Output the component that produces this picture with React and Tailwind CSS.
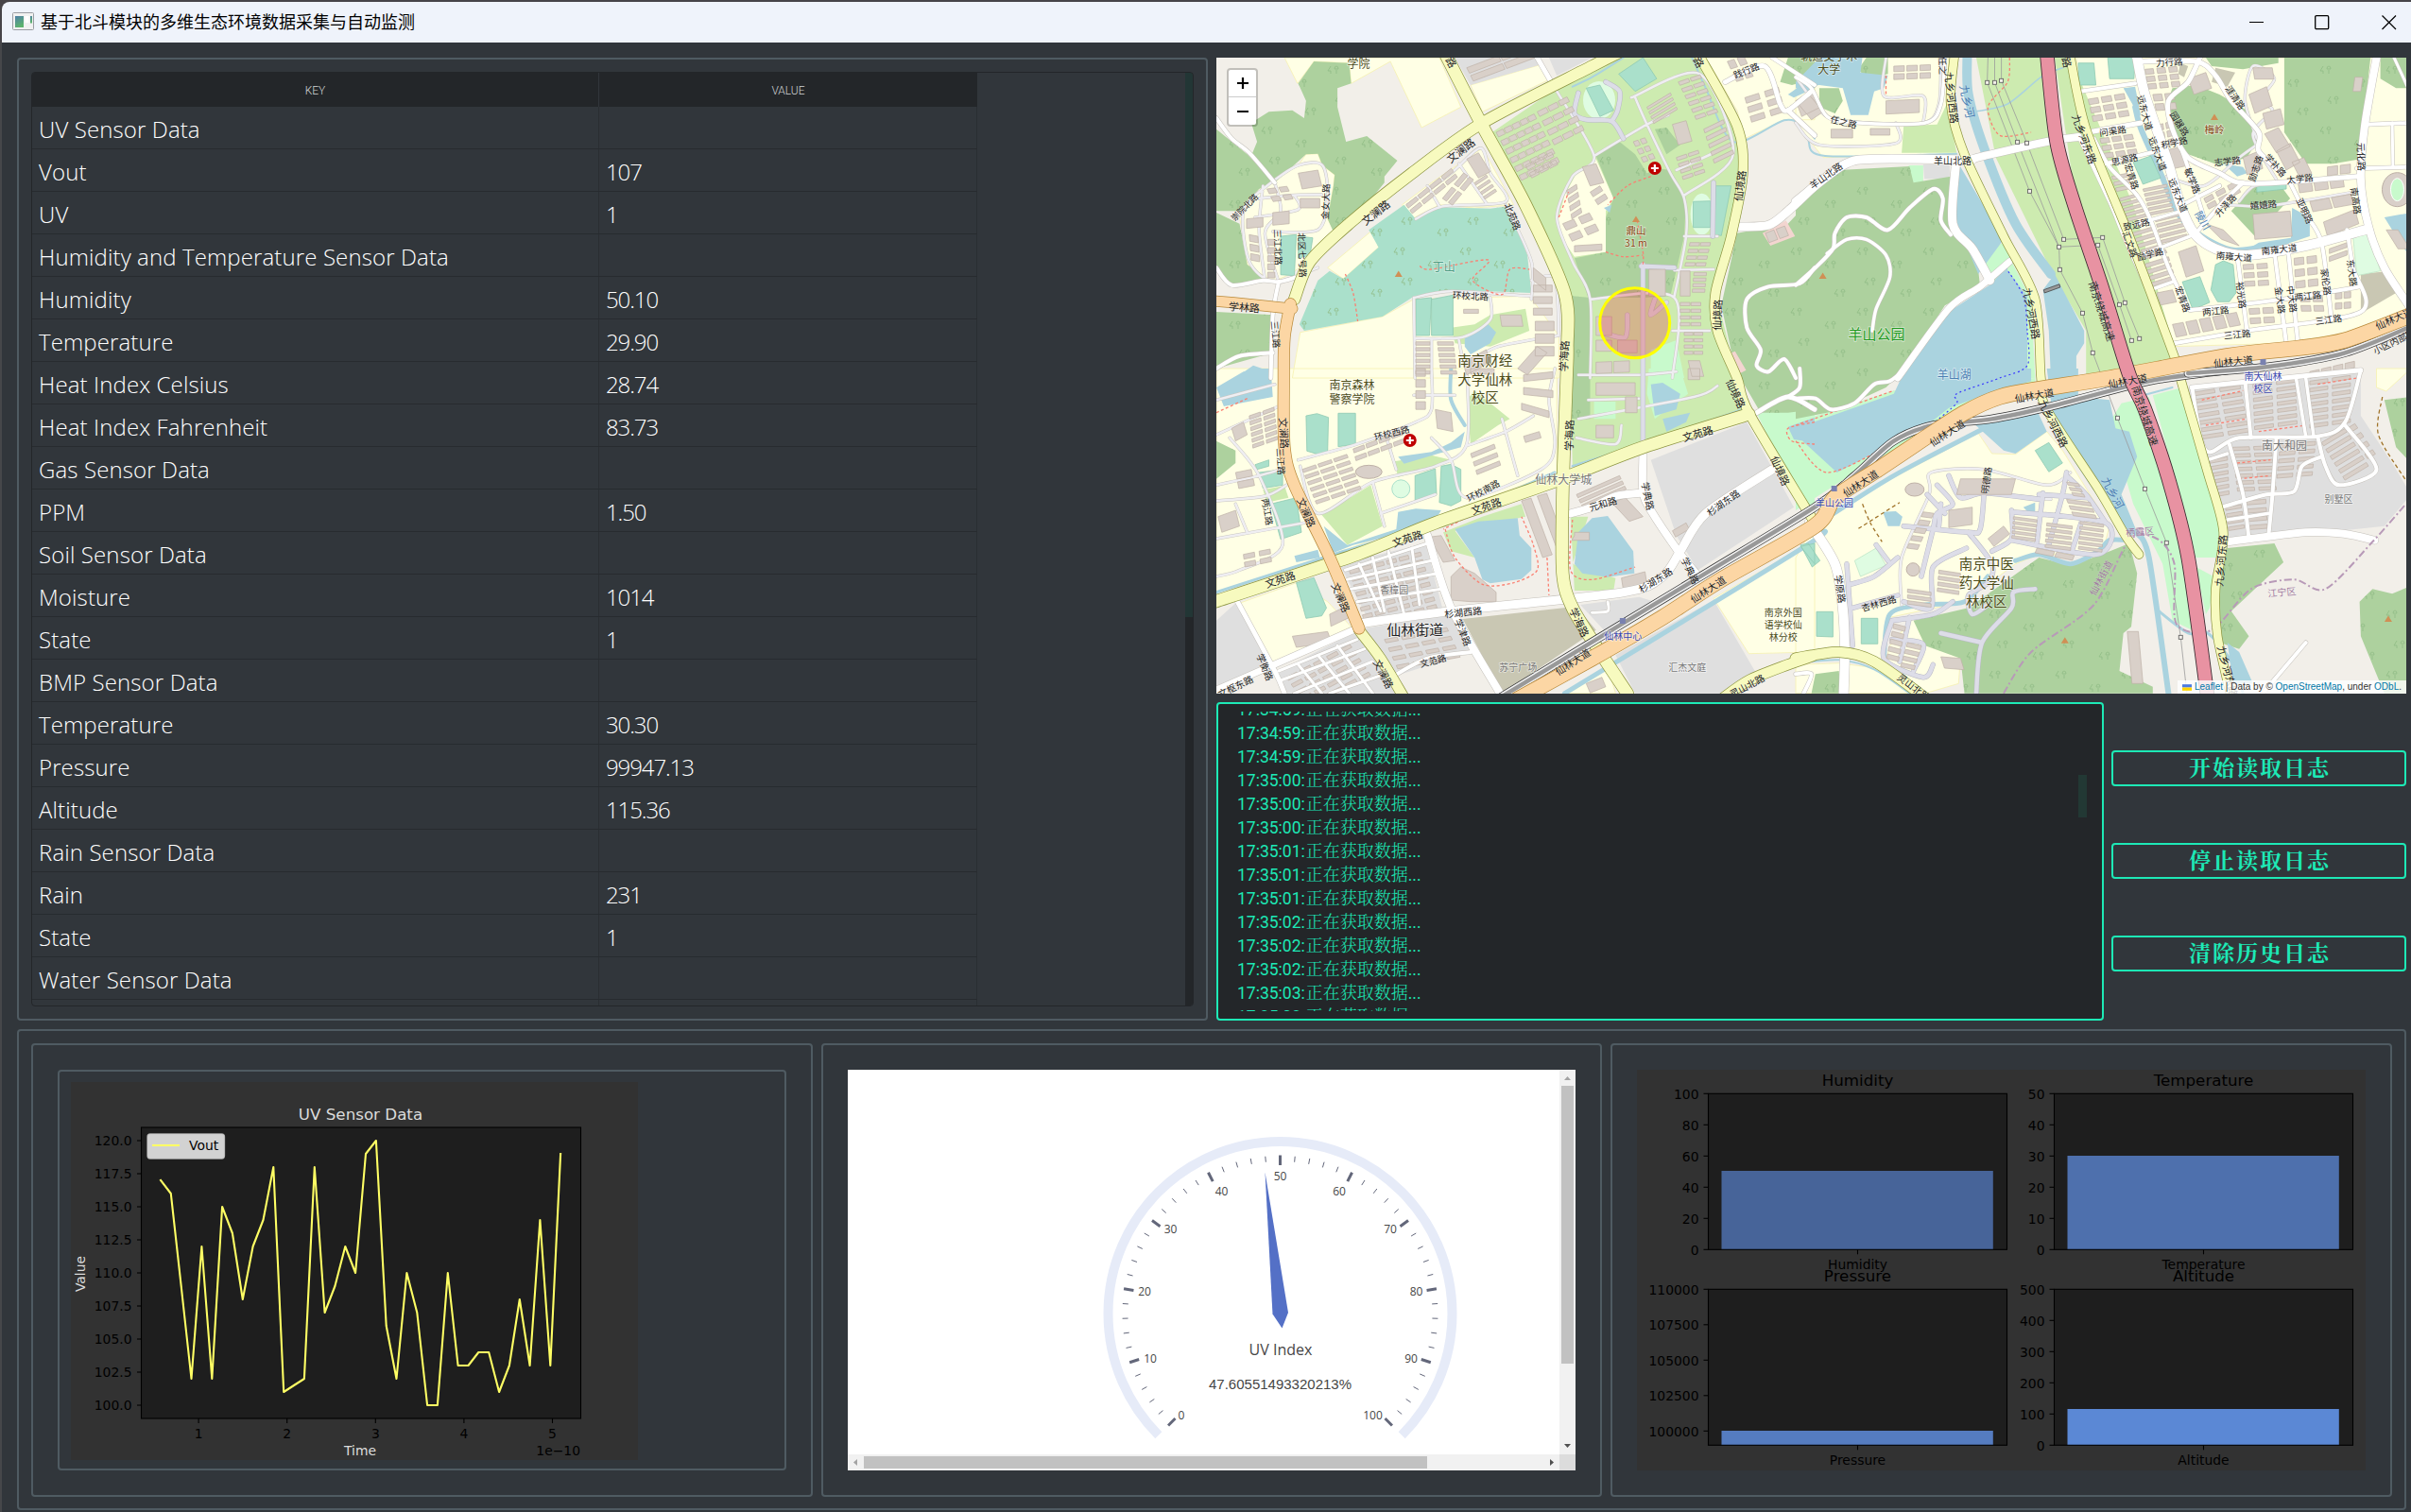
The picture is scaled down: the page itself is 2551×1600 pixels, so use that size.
import React from "react";

/* ------------------------------------------------------------------ */
/* Map geometry: coordinates are grouped in four sheets (A B C D).     */
/* "A 10,20 30,40|C 5,6" joins points that lie on different sheets.    */
/* ------------------------------------------------------------------ */
const SHEETS = {
  A: [1270, 50, 0.41454],
  B: [1900, 50, 0.41518],
  C: [1270, 390, 0.41454],
  D: [1900, 390, 0.41518],
};

const at = (s, u, v) => {
  const [x, y, k] = SHEETS[s];
  return [x + u * k, y + v / 3];
};

const parse = (str) =>
  str.split("|").flatMap((part) => {
    const [s, ...pts] = part.trim().split(/\s+/);
    return pts.map((p) => {
      const [u, v] = p.split(",").map(Number);
      return at(s, u, v);
    });
  });

const f = (n) => n.toFixed(1);
const poly = (str) => "M" + parse(str).map((p) => `${f(p[0])} ${f(p[1])}`).join("L") + "Z";

const curve = (str) => {
  const p = parse(str);
  let d = `M${f(p[0][0])} ${f(p[0][1])}`;
  for (let i = 0; i < p.length - 1; i++) {
    const a = p[i - 1] || p[i];
    const b = p[i];
    const c = p[i + 1];
    const e = p[i + 2] || c;
    const t = 7;
    d += `C${f(b[0] + (c[0] - a[0]) / t)} ${f(b[1] + (c[1] - a[1]) / t)} ${f(c[0] - (e[0] - b[0]) / t)} ${f(c[1] - (e[1] - b[1]) / t)} ${f(c[0])} ${f(c[1])}`;
  }
  return d;
};

const block = (s, u, v, ax, ay, bx, by, na, nb, fa = 0.8, fb = 0.6) => {
  let d = "";
  for (let i = 0; i < na; i++)
    for (let j = 0; j < nb; j++) {
      const c = (p, q) => {
        const m = (i + p) / na;
        const n = (j + q) / nb;
        const [x, y] = at(s, u + ax * m + bx * n, v + ay * m + by * n);
        return `${f(x)} ${f(y)}`;
      };
      d += `M${c(0, 0)}L${c(fa, 0)}L${c(fa, fb)}L${c(0, fb)}Z`;
    }
  return d;
};

const CREAM = [
  "A 215,33 248,115 290,45 380,50 385,115 485,45 565,255 665,190 610,33",
  "A 690,120 870,55 895,100 720,205",
  "A 100,540 150,440 250,375 270,340 300,338 312,375 343,405 340,440 325,545 345,590 320,640 230,720 185,745 120,690 110,600",
  "A 325,700 440,580 455,635 365,735",
  "A 255,905 465,855 545,800 840,790 915,915 915,1050 235,1050",
  "A 590,430 720,320 800,500 700,510 610,500 540,545 515,500",
  "A 1290,33 1568,33 1568,230 1490,230 1390,290 1370,200",
  "B 0,33 390,33 385,180 410,340 70,350 0,240",
  "B 715,33 1568,33 1568,840 1440,900 1240,940 960,950 740,300",
  "C 41,0 910,0 910,330 340,590 41,710",
  "C 100,745 245,680 325,740 385,820 180,940",
  "C 1310,730 1568,545 1568,900 1400,905",
  "C 940,1031 1040,950 1060,1031",
  "D 0,600 60,470 465,205 500,270 560,272 640,200 680,260 800,500 780,590 620,590 560,620 430,740 240,790 215,930 110,905 0,910",
  "D 0,940 110,935 200,950 300,1031 0,1031",
  "D 240,880 300,790 320,850 420,915 415,1000 330,1031 230,930",
  "D 1480,0 1568,0 1505,72 1480,60",
];
const GREY = [
  "A 650,33 860,33 870,55 690,120",
  "A 890,33 1000,33 910,90",
  "B 325,372 392,372 392,418 328,418",
  "C 355,620 575,555 620,770 430,800",
  "C 420,825 640,780 690,900 500,975",
  "C 200,960 390,840 440,900 520,1031 210,1031",
  "C 41,800 90,745 185,945 41,1010",
  "C 1150,290 1395,170 1515,440 1270,640 1215,530",
  "C 1060,910 1310,735 1425,980 1340,1031 1110,1031",
  "C 970,750 1120,725 1160,740 1030,830",
  "D 1000,60 1440,0 1440,150 1520,300 1568,400 1500,500 1200,540 1105,535 1040,270",
];
const GRASS = [
  "A 745,270 910,130 1050,33 1290,33 1380,250 1385,400 1320,800 1370,1050 945,1050 950,870 860,620",
  "A 640,890 700,880 740,850 830,830 840,900 740,950 650,940",
  "B 275,250 360,245 385,180 410,335 270,335",
  "B 460,33 640,33 680,420 850,1050 740,1050 740,900 655,720 510,350",
  "B 660,33 700,33 860,500 975,1000 850,1020 715,500",
  "C 945,0 1340,0 1400,130 950,310",
  "C 310,465 435,370 465,500 375,560",
  "C 680,100 700,70 790,160 760,180 690,240",
  "C 495,295 590,275 640,290 505,345",
  "C 160,385 215,372 225,410 170,425",
  "C 620,520 720,470 820,430 830,470 650,515 700,600 640,580",
  "C 945,470 990,470 950,620 1060,665 1055,705 955,705",
];
const MINT = [
  "A 1150,960 1215,930 1235,1050 1150,1050",
  "B 288,375 325,375 325,430 290,430",
  "B 470,650 530,620 550,680 600,800 610,1050 585,1050 575,790 500,745",
  "C 1420,140 1568,130 1568,500 1530,430",
  "C 1145,0 1225,0 1245,80 1160,160 1140,80",
  "C 1005,105 1060,105 1060,160 1005,160",
  "D 0,170 250,70 610,30 610,60 440,150 200,290 0,450",
  "D 800,170 830,110 900,90 950,300 1030,800 1010,830 960,800 935,620 860,430",
  "D 910,85 985,60 1100,540 1070,600 1020,600",
  "D 1020,630 1065,660 1055,760 1045,780",
];
const FOREST = [
  "A 250,115 290,45 380,50 385,115 350,130 350,190 372,300 425,282 503,360 470,410 470,430 415,515 345,600 325,545 340,440 343,405 312,375 300,338 270,340 190,430 130,345 145,300 130,240 175,205 235,200 265,225 270,170",
  "A 41,260 120,340 190,430 150,450 100,520 41,520",
  "A 41,525 100,560 120,690 180,745 80,755 41,700",
  "A 41,840 185,850 185,970 41,1020",
  "A 1010,345 1070,300 1110,340 1140,400 1170,385 1200,390 1240,480 1235,600 1200,790 1130,795 990,795 955,670 1035,650 1035,540 1055,480",
  "A 1160,260 1190,255 1225,310 1190,340",
  "A 950,790 995,795 1000,1050 945,1050",
  "A 1500,33 1568,33 1568,100 1510,120 1480,110",
  "A 1370,590 1500,560 1568,470 1568,1050 1370,1050 1330,820",
  "B 0,490 110,390 290,378 300,430 395,410 410,600 440,620 460,650 470,760 380,820 260,1050 0,1050",
  "B 60,130 110,130 120,170 100,210 60,190",
  "B 160,70 180,33 235,33 235,85 180,100",
  "B 960,130 1020,120 1080,150 1150,200 1180,290 1150,350 1080,375 1000,340 950,240 945,180",
  "B 1245,33 1465,33 1450,200 1440,355 1370,370 1300,370 1245,270",
  "B 1045,33 1230,33 1230,50 1140,70 1060,60",
  "B 1490,33 1568,33 1568,130 1530,130 1490,100",
  "B 1170,440 1230,430 1260,480 1170,600 1110,520",
  "C 41,230 90,260 90,300 41,350",
  "C 945,0 995,0 995,160 945,160",
  "C 1365,0 1568,0 1568,130 1500,140 1430,140",
  "D 0,0 280,0 230,60 100,135 0,160",
  "D 300,800 440,760 620,600 700,625 780,590 850,555 870,650 855,820 835,840 825,960 910,1010 910,1031 430,1031 420,920 330,880",
  "D 1100,570 1220,555 1243,615 1170,700 1110,770 1155,850 1130,890 1080,870 1070,720",
  "D 1437,740 1470,700 1520,715 1568,690 1568,1031 1500,1031 1440,850",
  "D 1500,100 1568,90 1568,300 1530,250",
  "D 50,970 110,960 115,1031 40,1031",
];
const TEAL_PARK = [
  "A 430,580 520,500 550,545 610,508 740,512 785,505 835,660 845,780 640,770 540,795 465,855 265,900 253,880 300,740 330,710 365,735 455,635",
];
const WATER = [
  "A 675,925 735,880 755,905 740,940 690,975 675,950",
  "A 100,1040 135,1010 170,1025 185,1050 90,1050",
  "A 1500,150 1568,90 1568,130 1515,160",
  "A 1030,510 1050,500 1045,525",
  "B 60,33 170,33 165,80 235,90 225,130 200,140 185,215 140,215 120,130 60,120 0,130 0,110",
  "B 415,370 530,610 465,720 405,540",
  "B 535,700 590,790 590,1050 255,1050 390,840 500,750",
  "B 630,770 660,720 735,900 735,940 715,980 715,1050 650,1050 645,900",
  "B 835,130 865,125 880,220 862,190",
  "B 1265,510 1310,540 1310,600 1250,625 1140,650 1180,620 1262,605",
  "B 1090,370 1140,380 1150,400 1125,410",
  "B 1500,540 1568,525 1568,670 1540,620",
  "C 41,60 110,10 140,0 180,0 185,90 60,120",
  "C 505,455 550,445 615,450 590,500 390,560 340,585 315,500 375,560 500,510",
  "C 650,510 710,485 765,480 810,475 815,530 845,570 845,640 820,668 740,682 720,670 700,600",
  "C 955,620 965,520 1000,475 1040,468 1070,520 1105,580 1108,650 1040,662 975,650",
  "C 1150,50 1180,45 1225,80 1215,130 1160,150",
  "C 1180,160 1250,140 1240,170 1190,200",
  "C 505,280 590,265 640,235 675,200 665,250 630,262 520,302",
  "C 240,595 300,575 305,600 245,615",
  "C 1500,185 1568,155 1568,235 1515,225",
  "D 280,0 600,0 600,40 480,85 390,125 330,185 105,330 0,210 0,190 250,80",
  "D 450,170 610,120 640,200 560,270 530,260",
  "D 640,0 720,0 720,90 800,100 815,190 850,200 870,280 830,400 870,520 840,540 660,200",
  "D 222,455 255,453 272,470 265,500 235,500",
  "D 580,440 610,425 610,455 595,460",
  "D 1100,870 1130,900 1165,1000 1115,1000",
];
const PITCH = [
  "A 550,800 590,795 585,915 550,915",
  "A 590,800 645,787 645,915 590,915",
  "A 205,600 245,595 240,725 205,722",
  "A 250,600 287,605 280,660 250,670",
  "A 985,130 1020,120 1055,200 1020,220",
  "A 1068,85 1130,33 1165,100 1110,140",
  "A 1258,490 1302,488 1302,572 1258,572",
  "A 1315,440 1355,440 1330,598 1312,595",
  "B 720,50 760,50 765,120 722,120",
  "B 795,33 865,33 862,100 800,100",
  "B 860,365 905,345 930,415 885,435",
  "B 985,745 1030,728 1055,810 1012,833",
  "B 1070,690 1090,678 1115,690 1122,780 1105,808 1075,808 1058,770",
  "B 1175,440 1250,430 1250,450 1175,460",
  "C 270,150 298,143 327,155 325,265 300,272 272,262",
  "C 352,142 396,142 396,240 352,248",
  "C 548,340 600,318 603,400 548,418",
  "C 615,310 640,304 665,320 665,420 640,436 610,425",
  "C 180,430 245,410 258,520 205,542",
  "C 150,330 210,320 210,370 160,380",
  "C 140,305 175,290 175,310 145,320",
  "C 245,680 290,664 322,760 310,785 270,793",
  "C 1532,565 1568,555 1568,620",
  "D 610,260 645,235 680,300 645,328",
  "D 12,560 32,555 62,610 42,630",
  "D 53,772 95,772 95,852 53,850",
  "D 167,793 209,793 209,874 167,874",
];
const PALE = ["D 150,610 205,570 230,625 165,660", "B 1420,600 1460,590 1490,710 1430,725"];
const OLIVE = [
  "C 670,795 960,755 1010,830 770,1031",
  "B 1440,720 1515,710 1530,780 1440,845",
  "B 1070,65 1120,80 1100,125 1060,110",
  "B 980,50 1000,60 990,95 975,85",
];
const ROSE = [
  "A 1435,590 1495,550 1518,600 1455,630",
  "A 1345,975 1365,965 1393,1025 1370,1040",
];

const BLOCKS = [
  ["A", 755, 270, 100, -60, 70, 165, 5, 6, 0.85, 0.55],
  ["A", 860, 205, 80, -50, 50, 120, 3, 4, 0.85, 0.5],
  ["A", 830, 375, 70, -45, 20, 50, 3, 2, 0.85, 0.6],
  ["A", 680, 65, 170, -80, 20, 50, 2, 2, 0.95, 0.7],
  ["A", 525, 500, 120, -120, 20, 35, 4, 2, 0.85, 0.6],
  ["A", 618, 480, 60, -90, 30, 25, 2, 2, 0.8, 0.7],
  ["A", 680, 355, 30, -20, 30, 60, 1, 1, 1, 1],
  ["A", 700, 430, 30, -25, 30, 60, 1, 4, 1, 0.5],
  ["A", 250, 400, 50, -10, 10, 50, 1, 1, 1, 1],
  ["A", 170, 450, 60, -10, 20, 50, 2, 2, 0.7, 0.6],
  ["A", 255, 480, 50, 0, 0, 30, 1, 1, 1, 1],
  ["A", 118, 545, 42, -5, 0, 30, 1, 1, 1, 1],
  ["A", 185, 525, 42, -5, 0, 40, 1, 1, 1, 1],
  ["A", 172, 610, 18, 0, 0, 130, 1, 5, 1, 0.7],
  ["A", 125, 595, 22, 5, 5, 90, 1, 3, 1, 0.7],
  ["A", 1140, 190, 60, -45, 20, 60, 1, 4, 1, 0.5],
  ["A", 1220, 110, 60, -25, 50, 130, 2, 6, 0.85, 0.5],
  ["A", 1285, 260, 50, -30, 30, 120, 1, 5, 1, 0.5],
  ["A", 1215, 350, 60, -25, 20, 80, 2, 4, 0.85, 0.5],
  ["A", 1205, 245, 35, -12, 15, 65, 1, 1, 1, 1],
  ["A", 1105, 300, 35, -15, 30, 75, 2, 3, 0.7, 0.6],
  ["A", 975, 380, 35, -10, 20, 60, 1, 1, 1, 1],
  ["A", 935, 455, 25, -20, 15, 100, 1, 4, 1, 0.6],
  ["A", 995, 460, 25, -20, 25, 50, 1, 2, 1, 0.6],
  ["A", 925, 560, 80, -40, 30, 70, 2, 2, 0.7, 0.6],
  ["A", 955, 630, 70, -5, 0, 28, 1, 1, 1, 0.7],
  ["A", 1250, 620, 55, 0, -15, 85, 2, 4, 0.9, 0.5],
  ["A", 1225, 710, 25, 0, 0, 80, 1, 1, 1, 1],
  ["A", 1145, 705, 42, 0, 0, 85, 1, 1, 1, 1],
  ["A", 1260, 715, 32, 0, -5, 70, 1, 4, 1, 0.6],
  ["A", 1225, 810, 55, 0, 0, 85, 2, 4, 0.9, 0.5],
  ["A", 1235, 905, 50, 0, 0, 80, 2, 4, 0.9, 0.5],
  ["A", 1010, 855, 40, 0, 0, 60, 1, 1, 1, 1],
  ["A", 1065, 930, 50, 0, 0, 40, 1, 1, 1, 1],
  ["A", 1010, 930, 40, 0, 0, 35, 1, 1, 1, 1],
  ["A", 1010, 1000, 90, -5, 0, 45, 2, 1, 0.9, 0.8],
  ["A", 1245, 995, 30, 0, 10, 50, 1, 1, 1, 1],
  ["A", 850, 700, 40, 40, 0, 40, 1, 1, 0.8, 1],
  ["A", 855, 870, 48, 0, 0, 120, 1, 3, 1, 0.75],
  ["A", 850, 755, 48, 0, 0, 110, 1, 3, 1, 0.6],
  ["A", 765, 850, 60, 0, 5, 40, 1, 1, 0.9, 0.9],
  ["A", 672, 832, 38, 0, 0, 14, 1, 1, 1, 0.9],
  ["A", 550, 935, 40, 0, 0, 110, 1, 6, 0.9, 0.6],
  ["A", 605, 935, 45, 0, 10, 110, 1, 6, 0.9, 0.6],
  ["A", 670, 1000, 60, -40, 10, 40, 1, 1, 1, 1],
  ["A", 810, 1020, 50, -70, 25, 20, 1, 1, 1, 1],
  ["A", 1345, 45, 50, -20, 30, 80, 2, 2, 0.7, 0.6],
  ["A", 1390, 160, 100, -40, 20, 90, 2, 3, 0.7, 0.6],
  ["A", 1520, 170, 48, -30, 15, 50, 1, 1, 1, 1],
  ["A", 1442, 590, 55, -25, 10, 30, 2, 1, 0.8, 1],
  ["B", 0, 170, 30, -25, 40, 60, 1, 1, 1, 1],
  ["B", 250, 60, 100, -5, 0, 50, 3, 2, 0.8, 0.7],
  ["B", 230, 170, 85, -5, 0, 42, 1, 1, 1, 1],
  ["B", 90, 260, 55, 0, 0, 35, 1, 1, 1, 0.8],
  ["B", 190, 258, 50, 0, 0, 30, 1, 1, 1, 0.7],
  ["B", 745, 165, 100, -20, 15, 80, 3, 3, 0.75, 0.65],
  ["B", 775, 290, 90, -15, 15, 70, 3, 3, 0.75, 0.65],
  ["B", 890, 70, 90, -10, 10, 70, 3, 3, 0.7, 0.7],
  ["B", 910, 150, 60, -5, 10, 60, 2, 2, 0.75, 0.7],
  ["B", 915, 250, 55, -20, 10, 80, 2, 3, 0.75, 0.7],
  ["B", 805, 410, 40, -10, 15, 55, 1, 3, 1, 0.6],
  ["B", 825, 480, 45, -15, 25, 80, 1, 5, 1, 0.55],
  ["B", 885, 450, 60, -15, 20, 90, 1, 6, 1, 0.55],
  ["B", 855, 590, 55, -20, 40, 90, 1, 5, 1, 0.55],
  ["B", 915, 545, 65, -20, 20, 85, 1, 5, 1, 0.55],
  ["B", 885, 690, 65, -25, 20, 80, 1, 4, 1, 0.6],
  ["B", 950, 325, 35, -10, 15, 60, 1, 1, 1, 1],
  ["B", 1000, 100, 45, -20, 15, 50, 1, 1, 1, 1],
  ["B", 975, 650, 45, -20, 20, 80, 1, 1, 1, 1],
  ["B", 1045, 560, 45, 20, 40, 50, 1, 1, 1, 1],
  ["B", 1040, 480, 90, -60, 15, 40, 3, 2, 0.7, 0.7],
  ["B", 1165, 530, 95, -10, 5, 80, 1, 1, 1, 1],
  ["B", 1280, 430, 120, -20, 5, 40, 3, 1, 0.85, 0.8],
  ["B", 1310, 490, 110, -25, 10, 40, 2, 1, 0.9, 0.8],
  ["B", 1345, 555, 80, -40, 10, 45, 1, 1, 1, 1],
  ["B", 1140, 350, 40, -20, 10, 55, 1, 1, 1, 1],
  ["B", 1165, 65, 55, 0, 5, 40, 1, 1, 0.9, 0.9],
  ["B", 1155, 150, 45, -25, 15, 60, 1, 1, 1, 1],
  ["B", 1190, 210, 45, -15, 10, 50, 1, 1, 1, 1],
  ["B", 1195, 275, 35, -20, 30, 60, 1, 1, 1, 1],
  ["B", 1225, 330, 35, -25, 25, 60, 1, 1, 1, 1],
  ["B", 1265, 365, 30, -15, 20, 50, 1, 1, 1, 1],
  ["B", 1355, 380, 65, -10, 0, 35, 2, 1, 0.8, 0.8],
  ["B", 1425, 95, 20, 0, -5, 45, 1, 1, 1, 1],
  ["B", 1140, 690, 70, -5, 5, 80, 2, 3, 0.75, 0.6],
  ["B", 1270, 670, 65, -10, 5, 110, 2, 3, 0.75, 0.6],
  ["B", 1285, 790, 65, 0, 5, 60, 2, 2, 0.75, 0.6],
  ["B", 1375, 780, 45, -5, 0, 65, 2, 2, 0.75, 0.6],
  ["B", 1360, 640, 45, -20, 0, 50, 1, 2, 1, 0.6],
  ["B", 1155, 830, 70, -5, 5, 60, 2, 2, 0.75, 0.6],
  ["B", 920, 780, 40, -10, 15, 55, 1, 1, 1, 0.7],
  ["B", 960, 880, 170, -40, 10, 40, 5, 1, 0.8, 1],
  ["B", 1310, 1030, 120, -35, 0, 30, 4, 1, 0.8, 0.7],
  ["B", 1505, 580, 30, 0, 30, 60, 1, 1, 1, 1],
  ["C", 125, 150, 70, -30, 10, 110, 2, 6, 0.8, 0.6],
  ["C", 80, 190, 30, -20, 20, 80, 1, 1, 1, 0.5],
  ["C", 90, 330, 40, -10, 10, 60, 1, 2, 1, 0.7],
  ["C", 260, 320, 120, -50, 40, 120, 3, 6, 0.85, 0.5],
  ["C", 390, 255, 130, -60, 10, 50, 4, 2, 0.85, 0.5],
  ["C", 600, 130, 40, 10, 5, 60, 1, 1, 1, 1],
  ["C", 550, 0, 35, 0, 0, 140, 1, 4, 0.7, 0.7],
  ["C", 690, 270, 60, -30, 20, 80, 1, 3, 1, 0.5],
  ["C", 825, 20, 75, -10, 0, 30, 1, 1, 1, 0.7],
  ["C", 825, 60, 75, 10, 0, 32, 1, 1, 1, 0.7],
  ["C", 820, 110, 70, 25, 0, 30, 1, 1, 1, 0.7],
  ["C", 825, 215, 40, -15, 10, 40, 1, 1, 1, 0.5],
  ["C", 690, 0, 60, 0, 0, 18, 1, 1, 1, 1],
  ["C", 45, 470, 45, -20, 10, 50, 1, 1, 1, 1],
  ["C", 110, 590, 80, -20, 5, 50, 2, 2, 0.7, 0.6],
  ["C", 330, 780, 50, -30, 5, 55, 1, 1, 1, 0.7],
  ["C", 235, 850, 90, -15, 10, 35, 1, 1, 1, 1],
  ["C", 380, 640, 190, -60, 45, 190, 6, 8, 0.75, 0.5],
  ["C", 470, 860, 170, -40, 40, 110, 4, 4, 0.75, 0.4],
  ["C", 220, 980, 170, -110, 60, 110, 5, 5, 0.75, 0.45],
  ["C", 820, 420, 80, -30, 60, 200, 2, 1, 0.6, 0.9],
  ["C", 960, 400, 110, -60, 20, 50, 1, 3, 1, 0.6],
  ["C", 1050, 425, 35, -15, 45, 60, 1, 1, 1, 1],
  ["C", 1075, 665, 60, -20, 5, 40, 1, 1, 1, 1],
  ["C", 585, 535, 30, -5, 35, 80, 1, 1, 1, 1],
  ["C", 1010, 45, 100, 0, 0, 40, 1, 1, 1, 1],
  ["C", 1085, 90, 30, 0, 0, 50, 1, 1, 1, 1],
  ["C", 1010, 180, 45, 0, 0, 40, 1, 1, 1, 1],
  ["C", 1245, 0, 30, 0, 0, 35, 1, 1, 1, 1],
  ["C", 1205, 515, 35, -25, 8, 20, 1, 1, 1, 1],
  ["C", 985, 1000, 40, -20, 10, 30, 1, 1, 1, 1],
  ["D", 420, 350, 140, 0, -10, 50, 1, 1, 1, 1],
  ["D", 390, 450, 60, -10, 0, 55, 1, 1, 1, 1],
  ["D", 555, 470, 60, 10, -5, 75, 1, 5, 1, 0.55],
  ["D", 640, 490, 65, 10, -5, 85, 1, 5, 1, 0.55],
  ["D", 725, 485, 60, 10, -5, 95, 1, 6, 1, 0.55],
  ["D", 690, 360, 30, 5, 20, 50, 1, 3, 1, 0.6],
  ["D", 690, 415, 60, 10, 20, 60, 1, 3, 1, 0.6],
  ["D", 365, 640, 55, 10, -5, 75, 1, 4, 1, 0.6],
  ["D", 285, 700, 60, 10, 0, 55, 1, 3, 1, 0.6],
  ["D", 325, 455, 30, 5, -45, 125, 1, 5, 0.9, 0.6],
  ["D", 490, 540, 40, -40, 15, 25, 1, 1, 1, 1],
  ["D", 615, 570, 100, 25, -5, 15, 2, 1, 0.9, 1],
  ["D", 250, 810, 30, 10, -20, 120, 1, 5, 1, 0.6],
  ["D", 285, 870, 35, 10, -20, 85, 1, 4, 1, 0.6],
  ["D", 370, 915, 50, 5, 10, 40, 1, 1, 1, 0.9],
  ["D", 845, 835, 28, 0, 12, 165, 1, 1, 1, 1],
  ["D", 1015, 75, 130, -25, 25, 160, 2, 7, 0.8, 0.5],
  ["D", 1165, 50, 120, -20, 5, 155, 2, 7, 0.8, 0.5],
  ["D", 1310, 40, 115, -20, 0, 160, 2, 7, 0.8, 0.5],
  ["D", 1055, 290, 45, -10, 5, 130, 1, 6, 1, 0.5],
  ["D", 1112, 250, 110, -5, 15, 150, 2, 7, 0.8, 0.5],
  ["D", 1235, 240, 100, -10, -10, 120, 2, 5, 0.8, 0.5],
  ["D", 1340, 235, 60, -45, 65, 130, 1, 6, 1, 0.5],
  ["D", 1405, 190, 60, 110, 20, -15, 4, 1, 0.5, 1],
  ["D", 1095, 440, 40, -8, 10, 85, 1, 4, 1, 0.5],
  ["D", 1148, 420, 50, -5, 5, 105, 1, 4, 1, 0.5],
];

const STREAMS = [
  ["B 437,33 440,150 480,320 560,560 650,720", 10],
  ["B 0,240 30,290 75,345 410,338", 2],
  ["B 455,205 540,180 625,95 680,65", 1.5],
  ["A 1255,33 1290,130 1360,300 1490,232 1540,250 1568,290", 2],
  ["A 1080,33 1000,95 950,125", 2],
  ["B 865,190 880,260 930,400 975,530 1035,600 1120,645 1250,618", 6],
  ["C 41,710 340,590 600,490 905,330", 3],
  ["C 950,310 1150,230 1395,125", 2.5],
  ["C 640,0 640,100 675,180", 4],
  ["D 60,490 250,340 480,190", 5],
  ["C 930,1031 1568,545|D 0,545 60,490", 5],
  ["D 560,610 620,590 700,620 770,580 800,545 850,545", 5],
  ["D 225,920 240,780 330,750 430,740 490,660", 5],
  ["D 868,520 900,600 950,1031", 6],
  ["D 870,90 960,60", 2],
  ["D 920,765 1000,840 1050,840 1110,930 1140,1031", 3],
  ["D 0,935 110,925 200,955 290,1031", 2],
];

const SERVICE = [
  "A 190,430 205,520 165,590 200,745",
  "A 150,480 230,470 310,468",
  "A 140,540 250,515 240,470",
  "A 160,440 150,580 165,740",
  "A 185,585 300,580 325,480 312,375 250,375 170,440 110,520 125,680 190,745 300,700",
  "A 530,500 640,400 715,320 740,400 780,490 620,505 550,545",
  "A 580,440 610,505",
  "A 660,370 730,495",
  "A 780,500 845,680 845,800",
  "A 545,795 640,775 840,790",
  "A 845,740 905,735 915,915",
  "A 545,795 548,1050",
  "A 548,925 670,920 740,865 740,795",
  "A 660,930 680,1000 760,950 915,915",
  "A 590,930 590,1050",
  "A 1110,160 1140,245 1200,400 1235,480 1240,600 1210,790",
  "A 910,140 1005,345 950,410 910,540 950,680 995,800 995,1050",
  "A 1100,160 1275,85 1360,340 1235,470",
  "A 1005,345 1140,245 1195,215",
  "A 1215,390 1320,330",
  "A 1235,600 1320,600",
  "A 995,800 1210,795 1205,1050",
  "A 1210,708 1310,705",
  "A 1205,900 1300,900",
  "B 0,95 50,180 80,220 155,238 325,240 365,180 370,33",
  "B 0,240 60,310 255,305 255,240",
  "B 230,33 225,155 325,155 325,240",
  "B 945,410 1040,440 1130,350 1175,310",
  "B 1130,490 1170,440 1260,430",
  "B 1100,500 1190,505 1280,490 1420,460",
  "B 1175,290 1145,170 1165,60 1220,100 1180,170 1215,200 1165,280 1225,420",
  "C 41,370 150,340 205,320",
  "C 41,100 190,50",
  "C 41,210 200,120",
  "C 75,220 150,340 210,560 100,640 41,660",
  "C 41,420 165,405 220,370",
  "C 41,540 265,490",
  "C 250,290 400,240 550,170 590,130 590,0",
  "C 255,310 300,460 440,360 600,310 680,240 680,0",
  "C 475,220 500,320",
  "C 590,220 640,290 680,410 870,320 905,240 890,100 905,0",
  "C 650,85 545,85",
  "C 680,245 780,200 850,150",
  "C 770,160 810,340",
  "C 440,360 470,500",
  "C 460,460 600,400",
  "C 90,430 120,520",
  "C 965,20 1120,20 1215,10",
  "C 990,100 1120,95",
  "C 965,160 1260,90 1320,55",
  "C 960,220 1060,240 1075,180",
  "D 430,370 460,400 480,395 650,415",
  "D 270,750 270,600 340,400 345,330 480,320 640,370 700,330",
];
const LILAC = [
  "A 1130,690 1130,1050|C 1130,0 1130,235",
  "A 1125,695 1210,700",
  "A 965,145 955,210 985,230 1050,235 1080,290",
  "A 1035,110 1070,140 1065,200 1050,235",
  "A 1310,430 1308,600",
  "A 1090,850 1085,920 1035,910",
  "A 1160,800 1150,850 1190,810",
  "D 480,395 470,510 440,520 275,500",
  "D 360,370 400,430 360,460 350,510 320,660",
  "D 390,340 420,410 480,395 620,415",
  "D 370,430 365,500",
  "D 440,520 500,620 490,680 440,720 450,780 490,750",
  "D 550,450 550,540 500,580",
  "D 550,455 790,490 770,590 550,545",
  "D 630,395 615,550",
  "D 690,330 680,400 645,560",
  "D 690,340 740,400 790,490",
  "D 620,400 745,410",
  "D 730,480 705,575",
  "D 435,570 350,630 345,760 275,740",
  "D 335,400 380,460",
  "D 130,620 145,880",
  "D 140,685 200,660 260,600",
  "D 205,560 235,610",
  "D 145,760 260,720",
  "D 460,1031 475,870 550,760 555,710 610,700",
  "D 370,840 475,870",
  "D 245,800 350,780 400,740",
  "D 245,800 225,920 325,980 350,940",
  "D 245,860 325,875 300,960",
  "D 290,790 265,930",
];
const WHITE = [
  ["A 41,225 80,290 125,335 190,430", 4],
  ["A 41,700 80,755 160,740 200,745 245,730", 4],
  ["A 200,745 185,850 180,1050", 4],
  ["A 860,33 900,120", 5],
  ["A 41,1020 100,980 185,970", 4],
  ["A 1375,570 1450,565 1500,520 1568,440", 9],
  ["A 1460,33 1568,120", 4],
  ["A 1340,110 1440,60 1480,180 1500,200 1560,140", 5],
  ["A 1500,200 1568,280", 5],
  ["A 1568,700 1530,750 1450,760 1395,800 1395,890 1430,960 1420,1010 1450,1030 1490,990 1520,1050", 4],
  ["B 0,490 120,375 200,355 450,357", 9],
  ["B 450,355 480,345 640,300 720,285", 8],
  ["B 408,370 400,560 450,640 495,740", 9],
  ["B 545,680 470,760 390,830 260,1050", 7],
  ["B 395,595 370,550 375,480 350,450 290,510 235,580 180,540 130,540 100,590 95,640 50,700 0,755", 4],
  ["B 80,655 130,610 180,610 230,660 240,730 205,830 195,900", 3.5],
  ["B 0,95 40,130 80,220 160,240 330,240 370,180 380,33", 3.5],
  ["B 870,33 890,150 950,370 980,500 1015,590 1070,640 1150,660 1300,630 1450,580", 10],
  ["B 1030,33 1000,110 950,170 960,260 1000,350 1080,400 1130,430 1230,430 1430,410", 5],
  ["B 870,45 1020,45 1070,90 1110,170 1180,270 1180,330 1240,400", 5],
  ["B 725,140 865,115", 4],
  ["B 745,270 880,240", 5],
  ["B 790,370 920,330", 4],
  ["B 760,290 800,380 870,470 905,550 950,700 1000,830", 4],
  ["B 720,280 800,490 850,640 960,945", 4],
  ["B 870,560 985,520", 3.5],
  ["B 880,660 1015,595", 3.5],
  ["B 905,770 960,745", 3.5],
  ["B 1480,33 1450,250 1440,420 1460,570 1500,700 1568,830", 8],
  ["B 1430,385 1568,380", 4],
  ["B 1455,245 1568,240", 4],
  ["B 1525,33 1568,150", 3],
  ["B 1520,240 1522,380", 3],
  ["B 965,940 1150,900 1440,840 1420,700 1405,580", 4],
  ["B 1005,835 1240,800 1440,760", 4],
  ["B 1125,660 1150,900", 4],
  ["B 1220,650 1250,940", 4],
  ["B 1255,650 1280,940", 4],
  ["B 1260,430 1300,530 1340,620 1365,860", 4],
  ["B 985,330 1010,420 1040,540", 4],
  ["B 1020,590 1090,490 1140,430", 4],
  ["B 985,500 1080,440", 4],
  ["C 1130,275 1130,390 1150,450 1220,580 1265,650", 8],
  ["C 1460,320 1290,460 1225,580 1180,660 1080,710 640,770 405,810", 9],
  ["C 945,460 1000,440 1060,405 1125,395", 8],
  ["C 580,530 640,760 765,1031", 8],
  ["C 95,740 190,960 215,1031", 5],
  ["C 41,1020 390,830", 7],
  ["C 495,975 580,920 690,900", 4],
  ["C 370,640 580,555", 3],
  ["C 375,670 590,610", 3],
  ["C 385,700 605,650", 3],
  ["C 400,740 615,700", 3],
  ["C 405,620 460,770", 3],
  ["C 440,600 470,770", 3],
  ["C 480,580 520,780", 3],
  ["C 540,570 560,750", 3],
  ["C 200,960 400,860", 3],
  ["C 205,990 420,890", 3],
  ["C 240,1031 440,930", 3],
  ["C 330,1031 470,970", 3],
  ["C 250,940 310,1031", 3],
  ["C 300,910 380,1031", 3],
  ["C 350,880 440,1031", 3],
  ["C 1000,775 1040,770 1040,740", 3],
  ["C 1420,140 1500,90 1568,130", 5],
  ["C 1500,90 1530,60 1530,0", 4],
  ["D 0,95 50,95 90,130 150,110 200,50 240,40 280,0", 4],
  ["D 35,490 100,620 120,760 125,900 122,1031", 10],
  ["D 1100,550 1300,520 1400,525 1475,545", 8],
  ["D 1300,870 1190,1031", 4],
  ["D 1010,60 1440,5", 5],
  ["D 1010,60 1045,260 1130,220 1330,215 1400,170 1440,5", 4],
  ["D 1145,40 1160,220", 4],
  ["D 1275,30 1300,215", 3.5],
  ["D 1300,30 1320,215", 3.5],
  ["D 1105,240 1140,400 1155,540", 4],
  ["D 1050,290 1100,270", 3.5],
  ["D 1085,440 1200,400 1270,390 1290,310 1340,280", 4],
  ["D 1225,220 1215,400 1205,530", 4],
  ["D 1330,215 1350,310 1385,370 1480,320 1400,180", 4],
  ["D 1100,480 1205,460", 3.5],
  ["D 0,970 40,970 20,1031", 4],
];

const YELLOW = [
  ["A 625,20 720,250 830,500 930,780 937,950 935,1050|C 925,400 925,650 950,760 1020,900 1090,1031", 14],
  ["A 1080,10 1000,60 720,240 540,400 380,560 280,680 240,800", 13],
  ["A 1270,20 1370,250 1385,400 1355,600 1315,780 1320,900 1370,1050|C 1400,140 1568,490|D 30,450", 11],
  ["C 25,745 400,590 600,490 900,360 1130,250 1400,145", 14],
  ["C 405,830 460,920 520,1045", 12],
  ["B 405,20 395,180 430,340 530,600 610,800 625,1050|D 640,130 770,380 840,530 875,590", 10],
  ["B 698,20 740,260 850,600 970,1000|D 980,30 1050,330 1090,520 1070,700 1075,850 1110,1045", 10],
  ["C 1330,1050 1400,990 1500,940 1568,910|D 0,920 110,900 200,930 330,1045", 12],
];
const ORANGE = [
  ["A 30,805 120,815 235,830", 12],
  ["A 230,815 215,920 213,1050|C 215,250 240,370 330,600 405,825", 13],
  ["C 810,1050 1000,920 1180,790 1330,670 1568,500|D 100,410 210,320 330,220 430,140 520,90 620,65 800,30|B 1100,980 1280,955 1400,930 1580,845", 17],
];
const MOTORWAY = "B 640,20 665,300 710,500 780,760 850,1040|D 890,130 950,350 1000,600 1050,1045";
const RAIL = [
  "C 765,1045 1250,680 1568,440|D 150,340 250,230 350,180 500,160 650,120 900,40 1100,5",
  "D 1000,15|B 1200,1015 1400,970 1580,880",
];
const FOOTPATHS = [
  "A 560,695 590,705 735,675 695,740 770,785 790,705 840,705",
  "A 370,720 390,780 402,870",
  "A 1150,410 1090,440 1040,500",
  "A 1115,550 1130,650 1130,690",
  "A 1035,650 1080,665 1130,660",
  "A 915,540 940,460",
  "B 545,33 540,110 490,190 520,280 600,270",
  "B 230,90 230,155",
  "B 960,1000 1240,940 1440,930 1568,830",
  "C 41,140 120,95",
  "C 625,510 650,600 720,685 800,680 860,640 850,560 820,470",
  "C 950,480 945,640 1000,670 1110,630",
  "C 885,600 890,720",
  "C 830,400 720,450 620,510",
  "D 0,180 250,70",
  "D 0,230 80,330 230,250",
  "C 1568,170 1500,190 1510,230 1568,240",
  "D 1035,100 1140,70",
  "D 1045,180 1150,160",
  "D 1330,50 1430,30",
  "D 1180,200 1300,180",
  "D 1125,300 1210,290",
  "D 1130,350 1210,340",
];

// [sheet, u, v, text, rotation, size, colour]
const K = "#222";
const LABELS = [
  ["A", 404, 52, "学院", 0, 12, "#4c4c19"],
  ["A", 640, 48, "路", 60, 11, K],
  ["A", 665, 328, "文澜路", -38, 11.5, K],
  ["A", 448, 525, "文澜路", -38, 11.5, K],
  ["A", 113, 508, "崇院北路", -45, 9, K],
  ["A", 320, 490, "金女大路", -88, 9.5, K],
  ["A", 198, 635, "三江北路", 88, 9.5, K],
  ["A", 260, 660, "北区七号路", 88, 9.5, K],
  ["A", 112, 826, "学林路", 4, 11, K],
  ["A", 192, 912, "三江路", 85, 9.5, K],
  ["A", 797, 538, "北苑路", 68, 10, K],
  ["A", 622, 698, "丁山", 0, 12, "#4f9c84"],
  ["A", 690, 790, "环校北路", 3, 9.5, K],
  ["A", 727, 995, "南京财经", 0, 14.5, "#4c4c19"],
  ["A", 929, 980, "学海路", -87, 11, K],
  ["A", 1112, 583, "鼎山", 0, 10.5, "#8b4513"],
  ["A", 1112, 620, "31 m", 0, 10.5, "#8b4513"],
  ["A", 1378, 440, "仙境路", -83, 11, K],
  ["A", 1320, 850, "仙境路", -87, 11, K],
  ["A", 1394, 74, "践行路", -22, 9.5, K],
  ["A", 1272, 48, "路", 60, 11, K],
  ["B", 85, 72, "大学", 0, 12, "#4c4c19"],
  ["B", 85, 30, "轨道交学术", 0, 12, "#4c4c19"],
  ["B", 374, 58, "任之", 88, 9.5, K],
  ["B", 397, 160, "九乡河西路", 83, 11, K],
  ["B", 437, 172, "九乡河", 78, 12, "#4d80b3"],
  ["B", 122, 238, "任之路", 14, 9.5, K],
  ["B", 400, 360, "羊山北路", 0, 10, K],
  ["B", 77, 408, "羊山北路", -35, 10, K],
  ["B", 206, 910, "羊山公园", 0, 15, "#229a22"],
  ["B", 404, 1040, "羊山湖", 0, 12, "#4d80b3"],
  ["B", 601, 845, "九乡河西路", 80, 11, K],
  ["B", 735, 292, "九乡河东路", 70, 11, K],
  ["B", 780, 838, "南京绕城高速", 72, 11, K],
  ["B", 690, 48, "路", 75, 11, K],
  ["B", 890, 208, "远东大道", 75, 9.5, K],
  ["B", 922, 338, "远东大道", 70, 9.5, K],
  ["B", 974, 470, "远东大道", 68, 9.5, K],
  ["B", 952, 48, "力行路", -4, 9.5, K],
  ["B", 808, 266, "问渠路", -8, 9.5, K],
  ["B", 838, 357, "思源路", -12, 9.5, K],
  ["B", 965, 303, "积学路", -12, 9.5, K],
  ["B", 978, 243, "园器路", 58, 9.5, K],
  ["B", 1120, 160, "涯清路", 55, 9.5, K],
  ["B", 1067, 262, "梅岭", 0, 10.5, "#8b4513"],
  ["B", 856, 410, "宏青路", 72, 9.5, K],
  ["B", 1011, 424, "敏学路", 68, 9.5, K],
  ["B", 1100, 362, "志学路", -6, 9.5, K],
  ["B", 1172, 385, "励志路", -72, 9.5, K],
  ["B", 1222, 375, "学补路", 48, 9.5, K],
  ["B", 1285, 418, "太学路", -6, 9.5, K],
  ["B", 1095, 502, "升泽路", -48, 9.5, K],
  ["B", 1192, 500, "嬉嬉路", -4, 9.5, K],
  ["B", 1297, 520, "亚明路", 65, 9.5, K],
  ["B", 1427, 488, "南高路", 82, 9.5, K],
  ["B", 1441, 348, "元化路", 88, 10, K],
  ["B", 1037, 550, "陵川", 60, 10.5, "#4d80b3"],
  ["B", 868, 563, "致远路", -12, 9.5, K],
  ["B", 852, 626, "汇文路", 70, 9.5, K],
  ["B", 903, 657, "励学路", -15, 9.5, K],
  ["B", 1117, 665, "南雍大道", 5, 9.5, K],
  ["B", 1232, 642, "南雍大道", -6, 9.5, K],
  ["B", 1417, 716, "东大路", 82, 9.5, K],
  ["B", 1351, 745, "家伦路", 82, 9.5, K],
  ["B", 1135, 787, "裕光路", 83, 9.5, K],
  ["B", 1234, 803, "金大路", 82, 9.5, K],
  ["B", 1264, 800, "中大路", 82, 9.5, K],
  ["B", 1305, 790, "两江路", -6, 9.5, K],
  ["B", 1070, 838, "两江路", -6, 9.5, K],
  ["B", 986, 800, "宏青路", 70, 9.5, K],
  ["B", 1125, 912, "三江路", -6, 9.5, K],
  ["B", 1358, 865, "三江路", -8, 9.5, K],
  ["B", 1525, 862, "仙林大道", -24, 10.5, K],
  ["B", 1525, 935, "小区内部路", -26, 9.5, K],
  ["B", 1115, 998, "仙林大道", -6, 10.5, K],
  ["C", 387, 52, "南京森林", 0, 12, "#4c4c19"],
  ["C", 387, 98, "警察学院", 0, 12, "#4c4c19"],
  ["C", 727, 35, "大学仙林", 0, 14.5, "#4c4c19"],
  ["C", 727, 93, "校区", 0, 14.5, "#4c4c19"],
  ["C", 489, 205, "环校西路", -14, 9.5, K],
  ["C", 722, 388, "环校南路", -28, 9.5, K],
  ["C", 213, 205, "文澜路", 87, 11, K],
  ["C", 205, 295, "三江路", 87, 9.5, K],
  ["C", 270, 457, "文澜路", 67, 11, K],
  ["C", 358, 727, "文澜路", 67, 11, K],
  ["C", 467, 970, "文澜路", 63, 11, K],
  ["C", 171, 455, "两江路", 80, 9.5, K],
  ["C", 942, 212, "学海路", -88, 11, K],
  ["C", 730, 437, "文苑路", -18, 11, K],
  ["C", 529, 540, "文苑路", -18, 11, K],
  ["C", 204, 670, "文苑路", -18, 11, K],
  ["C", 1270, 207, "文苑路", -16, 11, K],
  ["C", 927, 353, "仙林大学城", 0, 12, "#777"],
  ["C", 1028, 430, "元和路", -16, 10, K],
  ["C", 1142, 405, "学典路", 78, 10, K],
  ["C", 1335, 427, "杉湖东路", -35, 10, K],
  ["C", 1162, 672, "杉湖东路", -32, 10, K],
  ["C", 1250, 642, "学典路", 65, 10, K],
  ["C", 671, 774, "杉湖西路", -6, 10, K],
  ["C", 670, 838, "学津路", 68, 10, K],
  ["C", 495, 702, "香樟园", 0, 10, "#777"],
  ["C", 548, 830, "仙林街道", 0, 15, "#222"],
  ["C", 594, 928, "文范路", -14, 9.5, K],
  ["C", 967, 806, "学海路", 65, 11, K],
  ["C", 1079, 849, "仙林中心", 0, 10, "#3845b0"],
  ["C", 951, 932, "仙林大道", -33, 10.5, K],
  ["C", 1296, 702, "仙林大道", -33, 10.5, K],
  ["C", 811, 948, "苏宁广场", 0, 10, "#777"],
  ["C", 1243, 950, "汇杰文庭", 0, 10, "#777"],
  ["C", 1488, 774, "南京外国", 0, 10, "#4c4c19"],
  ["C", 1488, 813, "语学校仙", 0, 10, "#4c4c19"],
  ["C", 1488, 853, "林分校", 0, 10, "#4c4c19"],
  ["C", 1396, 1008, "灵山北路", -28, 10, K],
  ["C", 1366, 80, "仙境路", 65, 11, K],
  ["C", 1480, 325, "仙境路", 66, 11, K],
  ["C", 165, 948, "学衡路", 68, 10, K],
  ["C", 90, 1010, "文枢东路", -26, 10, K],
  ["D", 608, 86, "仙林大道", -10, 10.5, K],
  ["D", 846, 40, "仙林大道", -10, 10.5, K],
  ["D", 386, 205, "仙林大道", -33, 10.5, K],
  ["D", 165, 365, "仙林大道", -33, 10.5, K],
  ["D", 99, 428, "羊山公园", 0, 10, "#3845b0"],
  ["D", 1191, 24, "南大仙林", 0, 10, "#3845b0"],
  ["D", 1191, 63, "校区", 0, 10, "#3845b0"],
  ["D", 656, 175, "九乡河西路", 63, 11, K],
  ["D", 890, 150, "南京绕城高速", 72, 11, K],
  ["D", 808, 395, "九乡河", 62, 12, "#4d80b3"],
  ["D", 486, 355, "明德路", -82, 9.5, K],
  ["D", 877, 518, "栖霞区", -5, 10, "#a07aa0"],
  ["D", 778, 665, "仙林街道", -62, 10, "#a07aa0"],
  ["D", 1239, 710, "江宁区", -5, 10, "#a07aa0"],
  ["D", 1245, 245, "南大和园", 0, 12, "#777"],
  ["D", 1384, 416, "别墅区", 0, 10, "#777"],
  ["D", 1084, 610, "九乡河东路", -85, 11, K],
  ["D", 1100, 960, "九乡河东路", 75, 11, K],
  ["D", 486, 620, "南京中医", 0, 14.5, "#4c4c19"],
  ["D", 486, 680, "药大学仙", 0, 14.5, "#4c4c19"],
  ["D", 486, 740, "林校区", 0, 14.5, "#4c4c19"],
  ["D", 113, 700, "学原路", 82, 10, K],
  ["D", 212, 746, "杏林西路", -16, 9.5, K],
  ["D", 300, 1012, "灵山北路", 38, 10, K],
];

const PEAKS = [
  ["A", 506, 720], ["A", 1112, 546], ["B", 69, 726], ["B", 1067, 222], ["D", 686, 863], ["D", 1510, 795],
];
const PYLONS = [
  ["B", 488, 112], ["B", 507, 112], ["B", 524, 106], ["B", 565, 301], ["B", 589, 304], ["B", 596, 457],
  ["B", 683, 610], ["B", 782, 604], ["B", 671, 634], ["B", 770, 628], ["B", 673, 706], ["B", 839, 811],
  ["B", 825, 817], ["B", 731, 844], ["B", 876, 925], ["B", 856, 931], ["B", 757, 970],
  ["D", 820, 157], ["D", 890, 382], ["D", 945, 553], ["D", 981, 853],
];
const WIRES = [
  "B 490,33 488,112 596,457 671,634 673,706 731,844 757,970|D 820,157 890,382 945,553 981,853 997,1031",
  "B 507,33 507,112 565,301 671,634 770,628 825,817 856,931",
  "B 524,33 524,106 589,304 683,610 782,604 839,811 876,925",
];

function Areas({ list, fill, stroke = "none" }) {
  return <path d={list.map(poly).join("")} fill={fill} stroke={stroke} strokeWidth="0.8" />;
}

function Line({ d, w, color, dash, cap = "round" }) {
  return (
    <path d={curve(d)} fill="none" stroke={color} strokeWidth={w} strokeDasharray={dash} strokeLinecap={cap} strokeLinejoin="round" />
  );
}

function CityMap() {
  const mapPt = ([s, u, v]) => at(s, u, v);
  const markers = [["A", 1160, 384], ["C", 535, 228]].map(mapPt);
  return (
    <svg viewBox="1287 61 1259 673" className="block h-[673px] w-[1259px]">
      <defs>
        <pattern id="trees" width="70" height="64" patternUnits="userSpaceOnUse">
          <g fill="none" stroke="#8fbb84" strokeWidth="0.8">
            {[[8, 10], [44, 24], [16, 42], [54, 54]].map(([x, y]) => (
              <g key={x}>
                <path d={`M${x} ${y - 4}l-3 5h3v3`} />
                <path d={`M${x + 6} ${y + 4}v-4m-2 -1a2 3 0 1 1 4 0z`} />
              </g>
            ))}
          </g>
        </pattern>
      </defs>
      <rect x="1287" y="61" width="1259" height="673" fill="#f2efe9" />
      <Areas list={CREAM} fill="#ffffe5" stroke="#f6f1b0" />
      <Areas list={GREY} fill="#dfdfdf" />
      <Areas list={GRASS} fill="#cdebb0" />
      <Areas list={MINT} fill="#c8facc" />
      <Areas list={["A 910,560 930,470 960,400 1010,355 1055,480 1035,520 1035,650 955,665 920,600"]} fill="#ffffe5" />
      <Areas list={FOREST} fill="#add19e" />
      <Areas list={TEAL_PARK} fill="#aae0cb" />
      <Areas list={FOREST} fill="url(#trees)" />
      <Areas list={TEAL_PARK} fill="url(#trees)" />
      <Areas list={OLIVE} fill="#c9c7b3" />
      <Areas list={ROSE} fill="#f3d5d0" />
      <Areas list={WATER} fill="#aad3df" />
      {STREAMS.map(([d, w]) => <Line key={d} d={d} w={w} color="#aad3df" />)}
      <Areas list={PALE} fill="#dffce2" stroke="#bfe6c8" />
      <ellipse cx={at("C", 512, 382)[0]} cy={at("C", 512, 382)[1]} rx="9.5" ry="9.5" fill="#dffce2" stroke="#aae0cb" />
      <ellipse cx={at("A", 1018, 168)[0]} cy={at("A", 1018, 168)[1]} rx="17" ry="20" fill="#dffce2" />
      <ellipse cx={at("A", 1280, 530)[0]} cy={at("A", 1280, 530)[1]} rx="12" ry="22" fill="#dffce2" />
      <ellipse cx={at("B", 1533, 452)[0]} cy={at("B", 1533, 452)[1]} rx="16" ry="18" fill="#d9d0c9" stroke="#bdb0a6" />
      <ellipse cx={at("B", 1533, 452)[0]} cy={at("B", 1533, 452)[1]} rx="7" ry="12" fill="#c8facc" stroke="#fff" />
      <Areas list={PITCH} fill="#aae0cb" stroke="#8fcab3" />
      <g fill="none" stroke="#c9c6c0" strokeWidth="3.4" strokeLinecap="round">
        <path d={SERVICE.map(curve).join("")} />
      </g>
      <g fill="none" stroke="#efeef2" strokeWidth="2.5" strokeLinecap="round">
        <path d={SERVICE.map(curve).join("")} />
      </g>
      <path d={LILAC.map(curve).join("")} fill="none" stroke="#b9b9c6" strokeWidth="5.4" strokeLinecap="round" />
      <path d={LILAC.map(curve).join("")} fill="none" stroke="#dddde8" strokeWidth="4.4" strokeLinecap="round" />
      <path d={BLOCKS.map((b) => block(...b)).join("")} fill="#d9d0c9" stroke="#bfb1a7" strokeWidth="0.7" />
      <path
        d={[
          "C 640,660 665,630 700,650 755,710 755,740 690,740 640,735",
          "C 955,530 955,520 993,520 993,545 948,545",
        ].map(poly).join("")}
        fill="#d9d0c9" stroke="#bfb1a7" strokeWidth="0.7"
      />
      <ellipse cx={at("C", 430, 328)[0]} cy={at("C", 430, 328)[1]} rx="14" ry="7" fill="#d9d0c9" stroke="#bfb1a7" />
      <ellipse cx={at("D", 303, 384)[0]} cy={at("D", 303, 384)[1]} rx="10" ry="7" fill="#d9d0c9" stroke="#bfb1a7" />
      <ellipse cx={at("D", 299, 638)[0]} cy={at("D", 299, 638)[1]} rx="7" ry="7" fill="#d9d0c9" stroke="#bfb1a7" />
      {FOOTPATHS.map((d) => <Line key={d} d={d} w="1.3" color="#fa8072" dash="3 2.5" cap="butt" />)}
      <Line d="B 535,700 580,790 590,900 590,1010 520,1050|D 410,80 410,110 350,175" w="1.2" color="#3838ff" dash="2 3" cap="butt" />
      <Line d="D 170,430 190,490 220,550" w="1.3" color="#a0742a" dash="4 3" cap="butt" />
      <Line d="D 160,508 265,425" w="1.3" color="#a0742a" dash="4 3" cap="butt" />
      <Line d="D 1495,90 1485,210 1555,355" w="1.3" color="#a0742a" dash="4 3" cap="butt" />
      {WIRES.map((d) => <path key={d} d={"M" + parse(d).map((p) => p.map(f).join(" ")).join("L")} fill="none" stroke="#9b9b9b" strokeWidth="0.8" />)}
      {WHITE.map(([d, w]) => <Line key={d} d={d} w={w + 1} color="#c4c0ba" />)}
      {WHITE.map(([d, w]) => <Line key={d} d={d} w={w} color="#fff" />)}
      <Line d="D 530,1031 600,900 760,750 850,545 920,540 965,620 970,810 1060,830 1160,700 1270,670 1350,700 1470,550 1555,430" w="2" color="#b89ab8" dash="8 3 2 3" cap="butt" />
      {YELLOW.map(([d, w]) => <Line key={d} d={d} w={w} color="#8c9440" />)}
      {YELLOW.map(([d, w]) => <Line key={d} d={d} w={w - 1.4} color="#f7fabf" />)}
      {RAIL.map((d) => (
        <g key={d}>
          <Line d={d} w="9" color="#333" />
          <Line d={d} w="7.6" color="#f2f2f2" />
          <Line d={d} w="4.4" color="#999" />
        </g>
      ))}
      {ORANGE.map(([d, w]) => <Line key={d} d={d} w={w} color="#b98a3a" />)}
      {ORANGE.map(([d, w]) => <Line key={d} d={d} w={w - 1.4} color="#fcd6a4" />)}
      <Line d={MOTORWAY} w="15.5" color="#3a2a30" />
      <Line d={MOTORWAY} w="13.8" color="#e892a2" />
      <path d={poly("B 632,770 672,752 674,762 634,780")} fill="#999" stroke="#444" strokeWidth="0.8" />
      {PYLONS.map((p, i) => {
        const [x, y] = mapPt(p);
        return <rect key={i} x={x - 2} y={y - 2} width="4" height="4" fill="#f2efe9" stroke="#666" strokeWidth="0.9" />;
      })}
      {PEAKS.map((p, i) => {
        const [x, y] = mapPt(p);
        return <path key={i} d={`M${x} ${y - 3.5}l4 6.5h-8z`} fill="#d08f55" />;
      })}
      {[["C", 1078, 801], ["B", 1191, 999], ["D", 98, 381]].map((p, i) => {
        const [x, y] = mapPt(p);
        return <rect key={i} x={x - 3} y={y - 3} width="6" height="6" fill="#7981b0" />;
      })}
      <g style={{ fontFamily: '"Noto Sans CJK SC", sans-serif' }} textAnchor="middle">
        {LABELS.map(([s, u, v, t, r, size, c], i) => {
          const [x, y] = at(s, u, v);
          return (
            <text
              key={i} x={x} y={y + size * 0.37} fontSize={size} fill={c}
              transform={r ? `rotate(${r} ${f(x)} ${f(y)})` : undefined}
              stroke="#ffffff" strokeOpacity={r ? 0.25 : 0.5} strokeWidth={r ? 0.8 : 1.6} style={{ paintOrder: "stroke" }}
            >
              {t}
            </text>
          );
        })}
      </g>
      {markers.map(([x, y]) => (
        <g key={x}>
          <circle cx={x} cy={y} r="7" fill="#bf0000" />
          <path d={`M${x - 4} ${y}h8M${x} ${y - 4}v8`} stroke="#fff" strokeWidth="2.2" />
        </g>
      ))}
      <circle cx="1729.7" cy="341.7" r="37" fill="#e03a3a" fillOpacity="0.3" stroke="#ffff00" strokeWidth="3" />
    </svg>
  );
}

function MapPanel() {
  return (
    <div className="relative h-[673px] w-[1259px] overflow-hidden">
      <CityMap />
      <div className="absolute left-[11px] top-[11px] flex w-[33px] flex-col overflow-hidden rounded-[4px] border-2 border-black/20 bg-white bg-clip-padding">
        <span className="flex h-[29px] items-center justify-center border-b border-[#ccc]">
          <svg viewBox="0 0 12 12" className="h-3 w-3"><path d="M6 0v12M0 6h12" stroke="#000" strokeWidth="2.2" /></svg>
        </span>
        <span className="flex h-[29px] items-center justify-center">
          <svg viewBox="0 0 12 12" className="h-3 w-3"><path d="M0 6h12" stroke="#000" strokeWidth="2.2" /></svg>
        </span>
      </div>
      <div className="absolute bottom-0 right-0 flex h-[14px] w-[242px] items-center justify-center whitespace-pre bg-white/80 font-['Liberation_Sans'] text-[10px] leading-[14px] text-[#333]">
        <svg viewBox="0 0 12 8" className="mr-[3px] h-[7px] w-[10px]">
          <path fill="#4C7BE1" d="M0 0h12v4H0z" />
          <path fill="#FFD500" d="M0 4h12v4H0z" />
        </svg>
        <span className="text-[#0078a8]">Leaflet</span>
        <span> | Data by © </span>
        <span className="text-[#0078a8]">OpenStreetMap</span>
        <span>, under </span>
        <span className="text-[#0078a8]">ODbL</span>
        <span>.</span>
      </div>
    </div>
  );
}

/* ------------------------------ window ------------------------------ */

function TitleBar() {
  return (
    <header className="ml-[2px] flex h-[43px] items-center rounded-tl-[8px] bg-[#eff3fb] pl-[11px]">
      <svg viewBox="0 0 23 19" className="-mt-[3px] h-[19px] w-[23px]">
        <defs>
          <linearGradient id="appTile" x1="0" y1="0" x2="0.4" y2="1">
            <stop offset="0" stopColor="#4f7fa8" />
            <stop offset="1" stopColor="#5db36c" />
          </linearGradient>
        </defs>
        <rect x="0.5" y="0.5" width="22" height="18" rx="1" fill="#f1f1f1" stroke="#9a9da3" />
        <rect x="3" y="4" width="9" height="12" fill="url(#appTile)" />
        <rect x="13.5" y="4" width="4" height="7" fill="#fff" />
        <rect x="19" y="4" width="2" height="7.5" fill="url(#appTile)" />
      </svg>
      <h1 className="-mt-[3px] ml-[7px] font-['Noto_Sans_CJK_SC',sans-serif] text-[18px] leading-[24px] text-black">
        基于北斗模块的多维生态环境数据采集与自动监测
      </h1>
      <div className="ml-auto flex items-center pr-[15px]">
        <svg viewBox="0 0 16 16" className="h-4 w-4"><path d="M0 7.5h15" stroke="#000" /></svg>
        <svg viewBox="0 0 16 16" className="ml-[53px] h-4 w-4"><rect x="0.7" y="0.7" width="14" height="14" rx="1.2" fill="none" stroke="#000" strokeWidth="1.3" /></svg>
        <svg viewBox="0 0 16 16" className="ml-[55px] h-4 w-4"><path d="M.5.5l14.5 14.5M15 .5L.5 15" stroke="#000" strokeWidth="1.2" /></svg>
      </div>
    </header>
  );
}

const ROWS = [
  ["UV Sensor Data", ""],
  ["Vout", "107"],
  ["UV", "1"],
  ["Humidity and Temperature Sensor Data", ""],
  ["Humidity", "50.10"],
  ["Temperature", "29.90"],
  ["Heat Index Celsius", "28.74"],
  ["Heat Index Fahrenheit", "83.73"],
  ["Gas Sensor Data", ""],
  ["PPM", "1.50"],
  ["Soil Sensor Data", ""],
  ["Moisture", "1014"],
  ["State", "1"],
  ["BMP Sensor Data", ""],
  ["Temperature", "30.30"],
  ["Pressure", "99947.13"],
  ["Altitude", "115.36"],
  ["Rain Sensor Data", ""],
  ["Rain", "231"],
  ["State", "1"],
  ["Water Sensor Data", ""],
];

function SensorTable() {
  return (
    <section className="h-[1019px] w-[1260px] rounded-[4px] border-2 border-[#4f5b62] p-[13px]">
      <div className="flex h-[989px] w-[1230px] justify-between overflow-hidden rounded-[4px] border border-[#232629]">
        <div className="flex w-[1000px] flex-col">
          <div className="flex h-[36px] bg-[#232629] font-['Roboto'] text-[12px] font-light text-[#d0d3d5]">
            <span className="flex w-[600px] items-center justify-center border-r border-[#31363b] pt-[2px]">KEY</span>
            <span className="flex w-[400px] items-center justify-center pt-[2px]">VALUE</span>
          </div>
          {ROWS.map(([k, v], i) => (
            <div key={i} className="flex h-[45px] shrink-0 border-b border-[#272b2f] font-['Open_Sans'] text-[24px] font-light leading-[47px] text-white">
              <span className="w-[600px] border-r border-[#2a2e32] pl-[7px] tracking-[0.12px]">{k}</span>
              <span className="w-[400px] border-r border-[#2a2e32] pl-[7px] tracking-[-1.1px]">{v}</span>
            </div>
          ))}
          <div className="flex flex-1">
            <span className="w-[600px] border-r border-[#2a2e32]" />
            <span className="w-[400px] border-r border-[#2a2e32]" />
          </div>
        </div>
        <div className="w-2 bg-[#232629]">
          <div className="h-[576px] bg-[#223635]" />
        </div>
      </div>
    </section>
  );
}

const LOG = [
  "17:34:59", "17:34:59", "17:34:59", "17:35:00", "17:35:00", "17:35:00", "17:35:01", "17:35:01",
  "17:35:01", "17:35:02", "17:35:02", "17:35:02", "17:35:03", "17:35:03",
];

function LogPanel() {
  return (
    <div className="flex h-[337px] gap-2">
      <div className="h-[337px] w-[939px] rounded-[4px] border-2 border-[#1de9b6] bg-[#232629] py-[8px] pl-[20px] pr-[16px]">
        <div className="flex h-[317px] justify-between overflow-hidden">
          <div className="-mt-[14px] flex flex-col font-['Roboto','Noto_Sans_CJK_SC',sans-serif] text-[17.5px] leading-[25px] text-[#1de9b6]">
            {LOG.map((t, i) => (
              <div key={i} className="h-[25px] shrink-0 whitespace-nowrap">
                {t}:<span className="ml-[1px] font-['Noto_Serif_CJK_SC','Noto_Sans_CJK_SC',serif] text-[18px] font-light leading-none">正在获取数据</span>...
              </div>
            ))}
          </div>
          <div className="mt-[67px] h-[45px] w-[9px] bg-[#223834]" />
        </div>
      </div>
      <div className="flex w-[312px] flex-col gap-[60px] pt-[51px]">
        {["开始读取日志", "停止读取日志", "清除历史日志"].map((t) => (
          <button key={t} className="flex h-[38px] items-center justify-center rounded-[4px] border-2 border-[#1de9b6] pb-[3px] pl-[2px] font-['Noto_Serif_CJK_SC','Noto_Sans_CJK_SC',serif] text-[23px] font-bold leading-none tracking-[2px] text-[#1de9b6]">
            {t}
          </button>
        ))}
      </div>
    </div>
  );
}

/* ------------------------------ charts ------------------------------ */

const VOUT = [
  117, 116, 109, 102, 112, 102, 115, 113, 108, 112, 114, 118, 101, 101.5, 102, 118, 107, 109, 112, 110,
  119, 120, 106, 102, 110, 107, 100, 100, 110, 103, 103, 104, 104, 101, 103, 108, 103, 114, 103, 119,
];

function UvChart() {
  const y = (v) => 342 - (v - 100) * 14;
  const pts = VOUT.map((v, i) => `${(95 + i * 10.85).toFixed(1)},${y(v)}`).join(" ");
  return (
    <svg viewBox="0 0 600 400" className="block h-[400px] w-[600px] bg-[#323232] font-['DejaVu_Sans']" fontSize="13.9">
      <rect x="74.5" y="48" width="465" height="308" fill="#1e1e1e" stroke="#000" strokeWidth="1.1" />
      {[100, 102.5, 105, 107.5, 110, 112.5, 115, 117.5, 120].map((v) => (
        <g key={v}>
          <path d={`M70 ${y(v)}h5`} stroke="#000" strokeWidth="1.1" />
          <text x="64.5" y={y(v) + 5.2} textAnchor="end">{v.toFixed(1)}</text>
        </g>
      ))}
      {[1, 2, 3, 4, 5].map((n) => (
        <g key={n}>
          <path d={`M${41.5 + n * 93.6} 356v5`} stroke="#000" strokeWidth="1.1" />
          <text x={41.5 + n * 93.6} y="377" textAnchor="middle">{n}</text>
        </g>
      ))}
      <polyline points={pts} fill="none" stroke="#ffff64" strokeWidth="2.1" strokeLinejoin="round" strokeLinecap="square" />
      <rect x="81" y="55" width="81.5" height="26" rx="3" fill="#fff" fillOpacity="0.8" stroke="#cccccc" strokeOpacity="0.8" strokeWidth="1.3" />
      <path d="M86 67h29" stroke="#ffff64" strokeWidth="2.1" />
      <text x="125" y="72">Vout</text>
      <text x="306.5" y="40" textAnchor="middle" fontSize="16.7" fill="#dcdcdc">UV Sensor Data</text>
      <text x="306" y="395" textAnchor="middle" fill="#dcdcdc">Time</text>
      <text x="0" y="0" transform="translate(14.5 203) rotate(-90)" textAnchor="middle" fill="#dcdcdc">Value</text>
      <text x="539" y="395" textAnchor="end">1e−10</text>
    </svg>
  );
}

function Gauge() {
  const cx = 457.5;
  const cy = 258;
  const polar = (v, r) => {
    const a = ((225 - v * 2.7) * Math.PI) / 180;
    return [cx + r * Math.cos(a), cy - r * Math.sin(a)];
  };
  const [sx, sy] = polar(0, 182);
  const [ex, ey] = polar(100, 182);
  const ticks = [];
  for (let v = 0; v <= 100; v += 2) {
    const big = v % 10 === 0;
    const [x1, y1] = polar(v, big ? 167.5 : 167);
    const [x2, y2] = polar(v, big ? 157 : 161);
    ticks.push(<path key={v} d={`M${x1} ${y1}L${x2} ${y2}`} stroke="#63677a" strokeWidth={big ? 3 : 1} />);
  }
  const labels = [
    [0, 353, 366], [10, 320, 305.5], [20, 314, 234.5], [30, 341.5, 168.5], [40, 395.5, 128.5], [50, 457.5, 112.5],
    [60, 520, 128.5], [70, 574, 168.5], [80, 601.5, 234.5], [90, 596, 305.5], [100, 555.5, 366],
  ];
  return (
    <svg viewBox="0 0 753 407" className="block h-[407px] w-[753px] bg-white font-['Open_Sans']" fill="#464646" textAnchor="middle">
      <path d={`M${sx} ${sy}A182 182 0 1 1 ${ex} ${ey}`} fill="none" stroke="#e6ebf8" strokeWidth="10" />
      {ticks}
      {labels.map(([t, x, y]) => <text key={t} x={x} y={y + 4} fontSize="12">{t}</text>)}
      <path d="M441.500 108.5L449.5 258.5L459.5 273.5L466 257Z" fill="#5470c6" />
      <text x="458" y="301.500" fontSize="16">UV Index</text>
      <text x="457.5" y="338" fontSize="15" textLength="151" lengthAdjust="spacingAndGlyphs" className="font-['Liberation_Sans']">47.60551493320213%</text>
    </svg>
  );
}

function GaugeView() {
  return (
    <div className="grid h-[424px] w-[770px] grid-cols-[753px_17px] grid-rows-[407px_17px]">
      <Gauge />
      <div className="flex flex-col items-center bg-[#f1f1f1]">
        <svg viewBox="0 0 17 17" className="h-[17px] w-[17px]"><path d="M5 11h7L8.5 7z" fill="#a3a3a3" /></svg>
        <div className="h-[294px] w-[13px] bg-[#c1c1c1]" />
        <svg viewBox="0 0 17 17" className="mt-auto h-[17px] w-[17px]"><path d="M5 6h7L8.5 10z" fill="#505050" /></svg>
      </div>
      <div className="flex items-center bg-[#f1f1f1]">
        <svg viewBox="0 0 17 17" className="h-[17px] w-[17px]"><path d="M10 5v7L6 8.5z" fill="#a3a3a3" /></svg>
        <div className="h-[13px] w-[596px] bg-[#c1c1c1]" />
        <svg viewBox="0 0 17 17" className="ml-auto h-[17px] w-[17px]"><path d="M7 5v7L11 8.5z" fill="#505050" /></svg>
      </div>
      <div className="bg-[#dcdcdc]" />
    </div>
  );
}

const BARS = [
  { name: "Humidity", x: 75.5, y: 25.3, min: 0, max: 100, ticks: [0, 20, 40, 60, 80, 100], top: 107, fill: "#476499" },
  { name: "Temperature", x: 441.5, y: 25.3, min: 0, max: 50, ticks: [0, 10, 20, 30, 40, 50], top: 91, fill: "#4e70ad" },
  { name: "Pressure", x: 75.5, y: 232.3, min: 99000, max: 110000, ticks: [100000, 102500, 105000, 107500, 110000], top: 382, fill: "#557cc0" },
  { name: "Altitude", x: 441.5, y: 232.3, min: 0, max: 500, ticks: [0, 100, 200, 300, 400, 500], top: 359, fill: "#5b88d5" },
];

function BarCharts() {
  return (
    <svg viewBox="0 0 771 424" className="block h-[424px] w-[771px] bg-[#323232] font-['DejaVu_Sans']" fontSize="13.9">
      {BARS.map((b) => {
        const bottom = b.y + 165;
        return (
          <g key={b.name}>
            <rect x={b.x} y={b.y} width="316" height="165" fill="#1e1e1e" />
            <rect x={b.x + 14} y={b.top} width="287.3" height={bottom - b.top} fill={b.fill} />
            <rect x={b.x} y={b.y} width="316" height="165" fill="none" stroke="#000" strokeWidth="1.1" />
            {b.ticks.map((t) => {
              const ty = bottom - ((t - b.min) / (b.max - b.min)) * 165;
              return (
                <g key={t}>
                  <path d={`M${b.x - 5} ${ty}h5`} stroke="#000" strokeWidth="1.1" />
                  <text x={b.x - 10} y={ty + 5.2} textAnchor="end">{t}</text>
                </g>
              );
            })}
            <path d={`M${b.x + 158} ${bottom}v5`} stroke="#000" strokeWidth="1.1" />
            <text x={b.x + 158} y={bottom + 20.5} textAnchor="middle">{b.name}</text>
            <text x={b.x + 158} y={b.y - 8} textAnchor="middle" fontSize="16.7">{b.name}</text>
          </g>
        );
      })}
    </svg>
  );
}

export default function App() {
  return (
    <div className="flex h-[1600px] w-[2551px] flex-col overflow-hidden bg-[#31363b]">
      <div className="bg-[#464448] pt-[2px]">
        <TitleBar />
      </div>
      <div className="flex flex-1 border-l-2 border-[#46474a]">
        <main className="flex flex-col gap-[9px] pl-4 pt-4">
          <div className="flex gap-[9px]">
            <SensorTable />
            <div className="flex flex-col gap-[9px]">
              <MapPanel />
              <LogPanel />
            </div>
          </div>
          <div className="flex h-[509px] w-[2528px] gap-[9px] rounded-[4px] border-2 border-[#4f5b62] p-[13px]">
            <section className="h-[480px] w-[827px] rounded-[4px] border-2 border-[#4f5b62] p-[26px]">
              <div className="h-[424px] w-[771px] rounded-[4px] border-2 border-[#4f5b62] px-[12px] py-[11px]">
                <UvChart />
              </div>
            </section>
            <section className="h-[480px] w-[826px] rounded-[4px] border-2 border-[#4f5b62] p-[26px]">
              <GaugeView />
            </section>
            <section className="h-[480px] w-[827px] rounded-[4px] border-2 border-[#4f5b62] p-[26px]">
              <BarCharts />
            </section>
          </div>
        </main>
      </div>
    </div>
  );
}
